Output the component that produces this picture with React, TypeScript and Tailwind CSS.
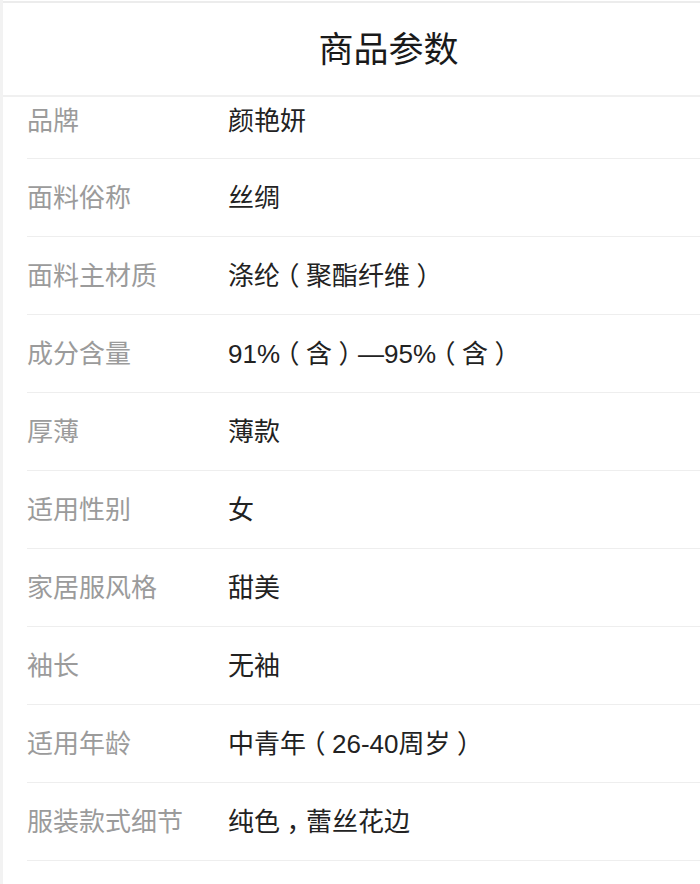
const params: [string, string][] = [
  ["品牌", "颜艳妍"],
  ["面料俗称", "丝绸"],
  ["面料主材质", "涤纶（聚酯纤维）"],
  ["成分含量", "91%（含）—95%（含）"],
  ["厚薄", "薄款"],
  ["适用性别", "女"],
  ["家居服风格", "甜美"],
  ["袖长", "无袖"],
  ["适用年龄", "中青年（26-40周岁）"],
  ["服装款式细节", "纯色，蕾丝花边"],
];

// full-width punctuation sits centred in its em box, as on the original page
function Value({ text }: { text: string }) {
  const parts = text.split(/([（），])/);
  return (
    <>
      {parts.map((p, i) =>
        p === "（" || p === "）" || p === "，" ? (
          <span key={i} className="inline-block w-[1em] text-center [font-feature-settings:'halt']">
            {p}
          </span>
        ) : (
          <span key={i}>{p}</span>
        )
      )}
    </>
  );
}

export default function App() {
  return (
    <div
      className="min-h-[884px] w-[700px] overflow-hidden bg-white border-l-[3px] border-[#f2f2f2]"
      style={{ fontFamily: '"Liberation Sans", "Noto Sans CJK SC", sans-serif' }}
    >
      <div className="mt-px border-t-2 border-[#ececec]">
        <div className="flex h-[94px] items-center justify-center border-b-2 border-[#f0f0f0] pl-[74px]">
          <h1 className="text-[35px] leading-none text-[#1a1a1a]">商品参数</h1>
        </div>
        <div className="pl-[24px]">
          {params.map(([label, value], i) => (
            <div
              key={label}
              className={`flex items-center border-b border-[#eeeeee] ${i === 0 ? "h-[62px] pb-[14px]" : "h-[78px]"}`}
            >
              <div className="w-[201px] shrink-0 text-[26px] leading-none text-[#9b9b9b]">{label}</div>
              <div className="text-[26px] leading-none text-[#222222]">
                <Value text={value} />
              </div>
            </div>
          ))}
        </div>
      </div>
    </div>
  );
}
